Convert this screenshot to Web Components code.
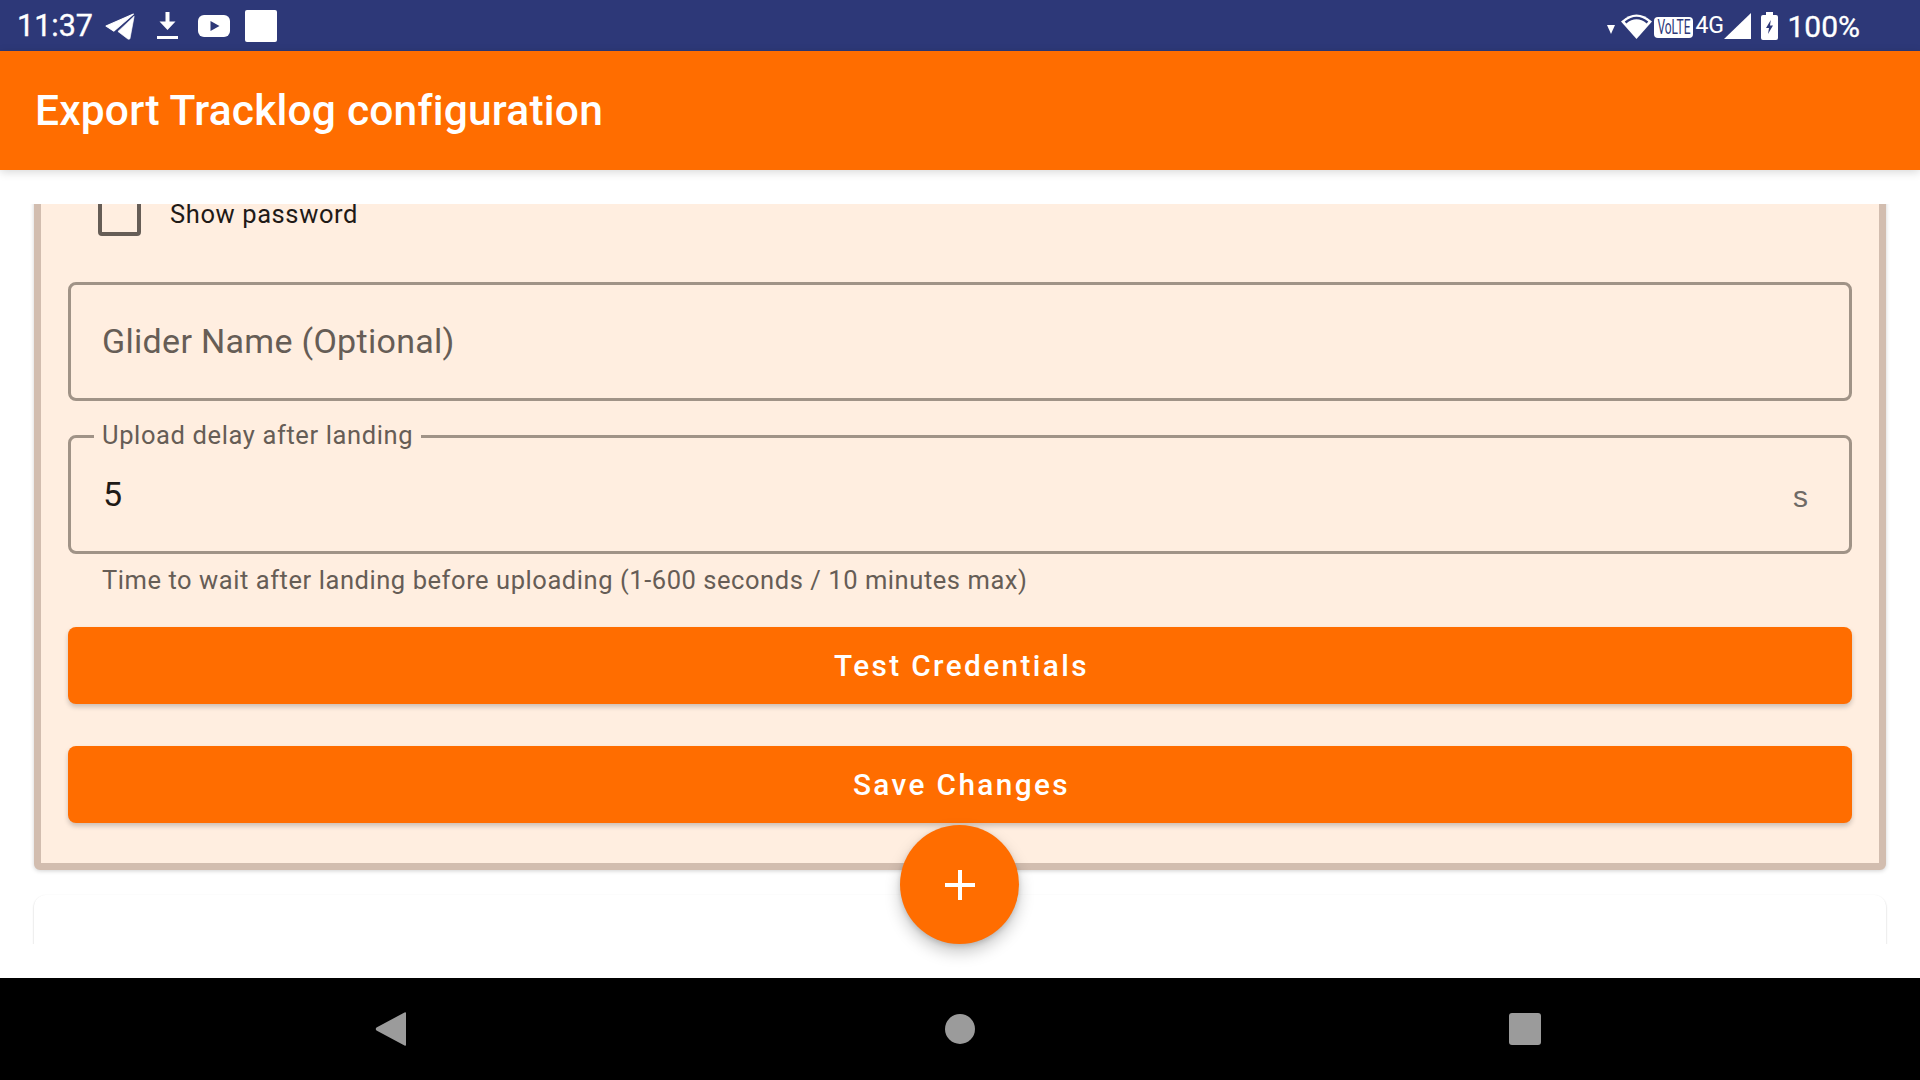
<!DOCTYPE html>
<html lang="en">
<head>
<meta charset="utf-8">
<title>Export Tracklog configuration</title>
<style>
html,body{margin:0;padding:0;height:100%;background:#fff;}
body{font-family:Roboto,"Liberation Sans",sans-serif;overflow:hidden;}
</style>
</head>
<body>
<app-screen>
  <status-bar slot="status"></status-bar>
  <app-bar slot="top">Export Tracklog configuration</app-bar>
  <config-card>
    <check-row>Show password</check-row>
    <outlined-field class="f1" placeholder="Glider Name (Optional)"></outlined-field>
    <outlined-field class="f2" label="Upload delay after landing" value="5" suffix="s" helper="Time to wait after landing before uploading (1-600 seconds / 10 minutes max)"></outlined-field>
    <action-button>Test Credentials</action-button>
    <action-button>Save Changes</action-button>
  </config-card>
  <blank-card></blank-card>
  <fab-button slot="fab"></fab-button>
  <nav-bar slot="nav"></nav-bar>
</app-screen>
<script>
function def(name, css, html){
  customElements.define(name, class extends HTMLElement{
    constructor(){
      super();
      const r=this.attachShadow({mode:'open'});
      r.innerHTML='<style>'+css+'</style>'+(typeof html==='function'?html(this):html);
    }
  });
}
def('app-screen',`
  :host{display:flex;flex-direction:column;width:1920px;height:1080px;position:relative;overflow:hidden;background:#fff;}
  .main{flex:1;min-height:0;padding:34px 0;display:flex;}
  .clip{flex:1;min-width:0;overflow:hidden;padding:0 34px;}
  .top{position:relative;z-index:2;}
`,`
  <div class="top"><slot name="status"></slot><slot name="top"></slot></div>
  <div class="main"><div class="clip"><slot></slot></div></div>
  <slot name="fab"></slot>
  <slot name="nav"></slot>
`);
const NAVY='#2d3878';
def('status-bar',`
  :host{display:flex;align-items:center;justify-content:space-between;height:51px;background:${NAVY};color:#fff;font:400 30.500px/1 Roboto,sans-serif;-webkit-text-stroke:.35px #fff;}
  .l,.r{display:flex;align-items:center;height:51px;}
  .l{padding-left:17px;}
  .r{padding-right:60px;}
  svg{display:block;flex:none;}
  .time{width:88px;margin-top:2px;}
  .volte{box-sizing:border-box;display:flex;align-items:center;justify-content:center;width:39px;height:21px;border-radius:4px;background:#fff;color:${NAVY};margin:3px 2px 0 2px;-webkit-text-stroke:0;font-size:12px;}
  .volte span{display:block;transform:scaleY(1.65);white-space:nowrap;}
  .g{font-size:23px;width:27px;margin-right:2px;margin-top:0;white-space:nowrap;-webkit-text-stroke:.1px #fff;}
  .pct{margin-left:9px;font-size:30px;margin-top:2px;}
`,`
  <div class="l">
    <span class="time">11:37</span>
    <svg width="30" height="27" viewBox="0 0 29 26" fill="#fff" style="margin-top:1px"><path d="M1 12.500 27.500 1 8.500 17.500Z" stroke="#fff" stroke-linejoin="round"/><path d="M28.200 3 24.200 24.500Q23.800 26 22 25L12.500 17.800Z" stroke="#fff" stroke-width=".6" stroke-linejoin="round"/></svg>
    <svg width="21" height="27" viewBox="0 0 21 27" fill="#fff" style="margin-left:22px"><path d="M8.500 0h4v9.500h6L10.500 18 2.500 9.500h6z"/><rect x="0" y="24" width="21" height="3"/></svg>
    <svg width="32" height="22" viewBox="0 0 32 22" style="margin-left:20px"><rect width="32" height="22" rx="6" fill="#fff"/><path d="M12.500 6v10l9-5z" fill="${NAVY}"/></svg>
    <svg width="32" height="32" viewBox="0 0 32 32" style="margin-left:15px"><rect width="32" height="32" rx="2" fill="#fff"/></svg>
  </div>
  <div class="r">
    <svg width="8" height="9" viewBox="0 0 8 9" fill="#fff" style="margin:8px 6px 0 0"><path d="M0 0h8L4 9z"/></svg>
    <svg width="31" height="26" viewBox="0 0 31 26" fill="#fff"><path d="M15.500 26 0 8.500Q15.500-5.500 31 8.500Z"/><path d="M4.500 9.500Q15.500 .5 26.500 9.500" fill="none" stroke="${NAVY}" stroke-width="2.500"/></svg>
    <span class="volte"><span>VoLTE</span></span>
    <span class="g">4G</span>
    <svg width="27" height="26" viewBox="0 0 27 26" fill="#fff"><path d="M27 0v26H0z"/></svg>
    <svg width="17" height="28" viewBox="0 0 17 28" fill="#fff" style="margin-left:10px"><path d="M5 0h7v3h3q2 0 2 2v21q0 2-2 2H2q-2 0-2-2V5q0-2 2-2h3z"/><path d="M9.800 8 5 16h3l-1 6 5-8.500H9z" fill="${NAVY}"/></svg>
    <span class="pct">100%</span>
  </div>
`);
def('app-bar',`
  :host{display:flex;align-items:center;box-sizing:border-box;height:119px;padding:2px 0 0 35px;background:#ff6d00;color:#fff;font:500 42.500px/1 Roboto,sans-serif;letter-spacing:.2px;box-shadow:0 2px 9px rgba(0,0,0,.16);}
`,`<slot></slot>`);
def('config-card',`
  :host{display:block;box-sizing:border-box;margin-top:-27px;padding:32px 27px 40px;background:#ffeee0;border:7px solid #d2bdaf;border-radius:6px;box-shadow:0 1px 4px rgba(0,0,0,.18);}
  .stack{display:flex;flex-direction:column;}
`,`<div class="stack"><slot></slot></div>`);
def('check-row',`
  :host{display:flex;align-items:flex-start;height:89px;padding-left:30px;color:#1f1a17;margin-top:-23px;}
  .box{box-sizing:border-box;flex:none;width:43px;height:43px;border:4px solid #665d56;border-radius:4px;}
  .t{margin-left:29px;font:400 25.500px/34px Roboto,sans-serif;letter-spacing:.6px;margin-top:4px;}
`,`<span class="box"></span><span class="t"><slot></slot></span>`);
def('outlined-field',`
  :host{display:block;position:relative;margin-bottom:34px;font-family:Roboto,sans-serif;}
  :host(.f2){margin-bottom:0;}
  .box{box-sizing:border-box;height:119px;border:3px solid #a09387;border-radius:8px;display:flex;align-items:center;justify-content:space-between;padding:0 32px 0 31px;font-size:34px;}
  .ph{color:#665d56;letter-spacing:.3px;margin-top:-1px;}
  .val{color:#1f1a17;padding-left:1px;letter-spacing:.3px;margin-top:-1px;}
  .suf{color:#6f6a66;margin-top:4px;margin-right:9px;font:400 30px/1 "Liberation Sans",sans-serif;}
  .lab{position:absolute;left:26px;top:-16px;padding:0 8px;background:#ffeee0;color:#665d56;font-size:25.500px;line-height:32px;letter-spacing:.62px;}
  .help{color:#665d56;font-size:25.500px;line-height:32px;letter-spacing:.56px;padding:10px 34px 31px;height:32px;}
`,(h)=>{
  const a=n=>h.getAttribute(n);
  return `<div class="box">`+
    (a('placeholder')?`<span class="ph">${a('placeholder')}</span>`:'')+
    (a('value')?`<span class="val">${a('value')}</span>`:'')+
    (a('suffix')?`<span class="suf">${a('suffix')}</span>`:'')+
    `</div>`+
    (a('label')?`<span class="lab">${a('label')}</span>`:'')+
    (a('helper')?`<div class="help">${a('helper')}</div>`:'');
});
def('action-button',`
  :host{display:flex;align-items:center;justify-content:center;box-sizing:border-box;padding-left:3px;height:77px;border-radius:8px;background:#ff6d00;color:#fff;font:500 29.750px/1 Roboto,sans-serif;letter-spacing:2.400px;box-shadow:0 3px 5px rgba(0,0,0,.2);margin-bottom:42px;}
  :host(:last-child){margin-bottom:0;}
`,`<slot></slot>`);
def('blank-card',`
  :host{display:block;height:120px;margin-top:25px;background:#fff;border-radius:12px;box-shadow:0 1px 2px rgba(0,0,0,.24);}
`,``);
def('fab-button',`
  :host{position:absolute;left:900px;top:825px;width:119px;height:119px;border-radius:50%;background:#ff6d00;display:flex;align-items:center;justify-content:center;box-shadow:0 8px 16px rgba(0,0,0,.22),0 2px 5px rgba(0,0,0,.14);}
  svg{display:block;}
`,`<svg width="30" height="30" viewBox="0 0 30 30" fill="#fff"><path d="M13 0h4v13h13v4H17v13h-4V17H0v-4h13z"/></svg>`);
def('nav-bar',`
  :host{display:flex;align-items:center;height:102px;background:#000;position:relative;z-index:1;}
  svg{display:block;position:absolute;}
`,`
  <svg style="left:375px;top:33px" width="32" height="36" viewBox="0 0 32 36" fill="#9b9b9b"><path d="M29.500 1.500Q31 .5 31 2.500v31q0 2-1.500 1L1.500 19.500q-1.500-1.500 0-3z"/></svg>
  <svg style="left:945px;top:36px" width="30" height="30" viewBox="0 0 30 30" fill="#9b9b9b"><circle cx="15" cy="15" r="15"/></svg>
  <svg style="left:1509px;top:35px" width="32" height="32" viewBox="0 0 32 32" fill="#9b9b9b"><rect width="32" height="32" rx="3"/></svg>
`);
</script>
</body>
</html>
